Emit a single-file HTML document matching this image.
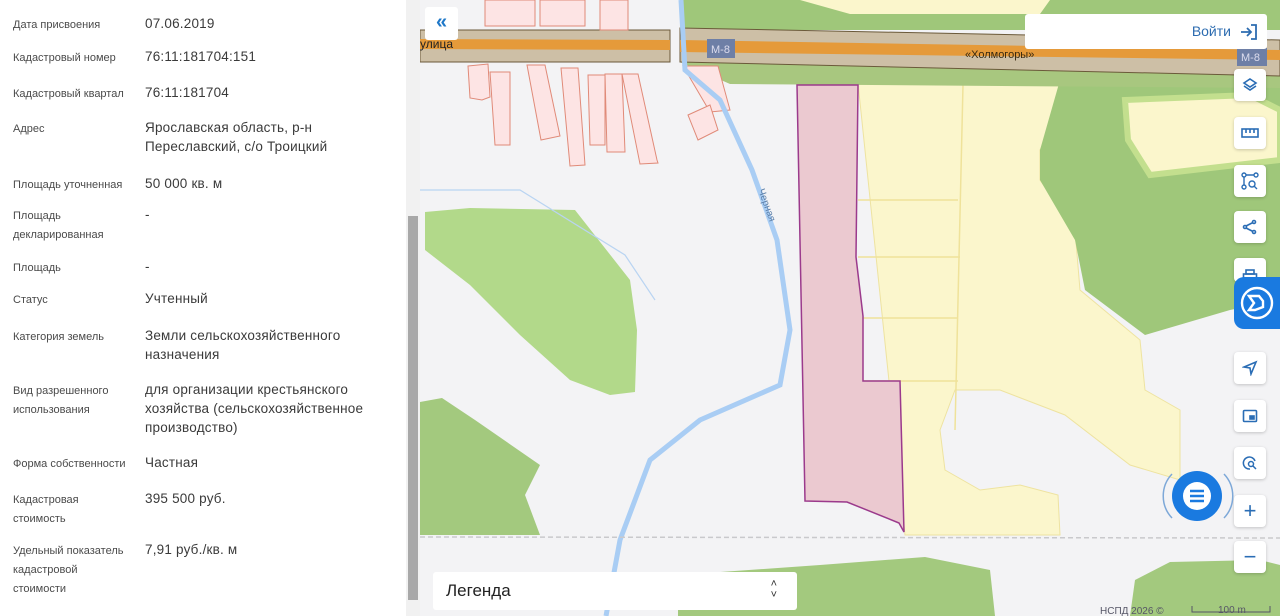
<!DOCTYPE html>
<html><head><meta charset="utf-8"><style>
*{margin:0;padding:0;box-sizing:border-box}
body{width:1280px;height:616px;overflow:hidden;position:relative;background:#f3f3f5;font-family:"Liberation Sans","DejaVu Sans",sans-serif}
#panel{position:absolute;left:0;top:0;width:406px;height:616px;background:#fff}
.l{position:absolute;left:13px;font-size:11px;color:#4a4a4a;line-height:19px}
.v{position:absolute;left:145px;font-size:13.5px;color:#3a3a3a;line-height:19px;letter-spacing:.2px}
#sb{position:absolute;left:406px;top:0;width:14px;height:616px;background:#f1f1f1}
#thumb{position:absolute;left:408px;top:216px;width:10px;height:384px;background:#a8a8a8}
.btn{position:absolute;left:1234px;width:32px;height:32px;background:#fff;border-radius:4px;box-shadow:0 1px 3px rgba(0,0,0,.2);display:flex;align-items:center;justify-content:center}
</style></head><body>
<svg style="position:absolute;left:0;top:0" width="1280" height="616" viewBox="0 0 1280 616">
<rect x="420" y="0" width="860" height="616" fill="#f3f3f5"/>
<polygon points="425,212 470,208 575,210 630,280 637,330 635,392 610,395 570,380 520,335 470,285 425,250" fill="#b2d98a"/>
<polygon points="420,402 442,398 475,420 540,465 525,495 540,535 420,535" fill="#a3c97e"/>
<polygon points="678,575 820,565 925,557 990,570 995,616 678,616" fill="#a3c97e"/>
<polygon points="1135,580 1170,562 1260,560 1280,565 1280,616 1130,616" fill="#a3c97e"/>
<polygon points="680,0 1280,0 1280,30 680,30" fill="#9fc77a"/>
<polygon points="800,0 1050,0 1040,14 850,14" fill="#fbf6cc"/>
<polygon points="858,83 1080,80 1040,150 1040,180 1075,230 1080,290 1140,340 1145,390 1180,410 1180,480 1130,465 1065,415 1000,390 955,390 940,430 945,470 980,490 1020,485 1058,495 1060,535 905,535" fill="#fbf6cc" stroke="#eee3a0" stroke-width="1"/>
<polygon points="1060,80 1280,80 1280,300 1230,310 1145,335 1085,290 1075,240 1040,180 1040,150" fill="#9fc77a"/>
<polygon points="1125,100 1250,95 1280,110 1280,160 1150,175 1128,140" fill="#fbf6cc" stroke="#c3df8e" stroke-width="6"/>
<path d="M858,200H958M858,257H960M858,318H958M863,381H958M963,85L955,430" stroke="#efe29a" stroke-width="1.5" fill="none"/>
<polygon points="680,62 1280,72 1280,88 730,84" fill="#a8c77f"/>
<polygon points="420,30 670,30 670,62 420,62" fill="#cdbfa6" stroke="#6b5a3a" stroke-width="1"/>
<polygon points="680,28 1280,40 1280,76 680,62" fill="#cdbfa6" stroke="#6b5a3a" stroke-width="1"/>
<polygon points="420,39 670,40 670,50 420,49" fill="#e59a3a"/>
<polygon points="680,40 1280,50 1280,60 680,52" fill="#e59a3a"/>
<g fill="#fde4e4" stroke="#e08a78" stroke-width="1">
<rect x="485" y="0" width="50" height="26"/><rect x="540" y="0" width="45" height="26"/><rect x="600" y="0" width="28" height="30"/>
<polygon points="468,66 488,64 490,97 482,100 470,98"/><polygon points="490,72 510,72 510,145 495,145"/>
<polygon points="527,65 545,65 560,136 541,140"/><polygon points="561,68 578,68 585,165 570,166"/>
<polygon points="588,75 605,75 605,145 590,145"/><polygon points="605,74 622,74 625,152 607,152"/>
<polygon points="622,74 638,74 657,160 658,163 640,164"/><polygon points="683,66 718,66 730,110 710,112"/>
<polygon points="688,115 710,105 718,130 698,140"/>
</g>
<path d="M681,0 L685,70 L720,100 L752,170 L777,240 L790,330 L780,385 L700,420 L650,460 L620,540 L606,616" stroke="#a9cdf4" stroke-width="5" fill="none"/>
<path d="M420,190 L520,190 L625,255 L655,300" stroke="#b9d4f2" stroke-width="1.2" fill="none"/>
<text x="758" y="190" font-size="10" fill="#5c7fa8" transform="rotate(70 758 190)">Черная</text>
<polygon points="797,85 858,85 856,257 863,316 863,381 900,381 904,532 899,523 847,502 805,501" fill="#ebc9d0" stroke="#9b3a8c" stroke-width="1.5"/>
<path d="M420,537 L1280,538" stroke="#c9c9cc" stroke-width="1.5" stroke-dasharray="5,3"/>
<rect x="707" y="39" width="28" height="19" fill="#6e7fa6"/><text x="711" y="53" font-size="11" fill="#dde">M-8</text>
<rect x="1237" y="48" width="30" height="18" fill="#6e7fa6"/><text x="1241" y="61" font-size="11" fill="#dde">M-8</text>
<text x="965" y="58" font-size="11" fill="#3a2a10">«Холмогоры»</text>
<text x="420" y="48" font-size="12" fill="#222">улица</text>
<text x="1100" y="614" font-size="10" fill="#556">НСПД 2026 ©</text>
<text x="1218" y="613" font-size="10" fill="#556">100 m</text>
<path d="M1192,606V612H1270V606" stroke="#556" fill="none"/>
</svg>
<div id="panel">
<div class="l" style="top:16px">Дата присвоения</div><div class="v" style="top:14px">07.06.2019</div>
<div class="l" style="top:49px">Кадастровый номер</div><div class="v" style="top:47px">76:11:181704:151</div>
<div class="l" style="top:85px">Кадастровый квартал</div><div class="v" style="top:83px">76:11:181704</div>
<div class="l" style="top:120px">Адрес</div><div class="v" style="top:118px">Ярославская область, р-н<br>Переславский, с/о Троицкий</div>
<div class="l" style="top:176px">Площадь уточненная</div><div class="v" style="top:174px">50 000 кв. м</div>
<div class="l" style="top:207px">Площадь<br>декларированная</div><div class="v" style="top:205px">-</div>
<div class="l" style="top:259px">Площадь</div><div class="v" style="top:257px">-</div>
<div class="l" style="top:291px">Статус</div><div class="v" style="top:289px">Учтенный</div>
<div class="l" style="top:328px">Категория земель</div><div class="v" style="top:326px">Земли сельскохозяйственного<br>назначения</div>
<div class="l" style="top:382px">Вид разрешенного<br>использования</div><div class="v" style="top:380px">для организации крестьянского<br>хозяйства (сельскохозяйственное<br>производство)</div>
<div class="l" style="top:455px">Форма собственности</div><div class="v" style="top:453px">Частная</div>
<div class="l" style="top:491px">Кадастровая<br>стоимость</div><div class="v" style="top:489px">395 500 руб.</div>
<div class="l" style="top:542px">Удельный показатель<br>кадастровой<br>стоимости</div><div class="v" style="top:540px">7,91 руб./кв. м</div>
</div>
<div id="sb"></div><div id="thumb"></div>
<div style="position:absolute;left:425px;top:7px;width:33px;height:33px;background:#fff;border-radius:3px;color:#1f78c8;font-size:20px;text-align:center;line-height:30px;font-weight:bold">«</div>
<div style="position:absolute;left:1025px;top:14px;width:242px;height:35px;background:#fff;border-radius:3px;color:#2d6cb0;font-size:14px;text-align:right;padding:9px 36px 0 0">Войти</div>
<svg style="position:absolute;left:1240px;top:23px" width="18" height="18" viewBox="0 0 18 18" fill="none" stroke="#2d6cb0" stroke-width="1.8"><path d="M1,9H11M7,5L11,9L7,13M11,2H16V16H11"/></svg>
<div class="btn" style="top:69px"><svg width="16" height="16" viewBox="0 0 16 16" fill="none" stroke="#2a6db5" stroke-width="1.6"><path d="M8,2L14,6L8,10L2,6Z M2,9L8,13L14,9"/></svg></div>
<div class="btn" style="top:117px"><svg width="18" height="12" viewBox="0 0 18 12" fill="none" stroke="#2a6db5" stroke-width="1.6"><rect x="1" y="2" width="16" height="8"/><path d="M5,2V6M9,2V6M13,2V6"/></svg></div>
<div class="btn" style="top:165px"><svg width="18" height="18" viewBox="0 0 18 18" fill="none" stroke="#2a6db5" stroke-width="1.4"><circle cx="3" cy="3" r="2"/><circle cx="15" cy="3" r="2"/><circle cx="3" cy="15" r="2"/><circle cx="11" cy="12" r="3"/><path d="M5,3H13M3,5V13M13,14L16,17"/></svg></div>
<div class="btn" style="top:211px"><svg width="16" height="16" viewBox="0 0 16 16" fill="none" stroke="#2a6db5" stroke-width="1.6"><circle cx="12" cy="3" r="1.5"/><circle cx="3" cy="8" r="1.5"/><circle cx="12" cy="13" r="1.5"/><path d="M4,7L11,3.5M4,9L11,12.5"/></svg></div>
<div class="btn" style="top:258px;height:24px;align-items:flex-end"><svg width="16" height="14" viewBox="0 0 16 14" fill="none" stroke="#2a6db5" stroke-width="1.6"><rect x="4" y="2" width="8" height="4"/><rect x="1.5" y="6" width="13" height="8"/></svg></div>
<div style="position:absolute;left:1234px;top:277px;width:46px;height:52px;background:#1a7ae0;border-radius:10px 0 0 10px"><svg width="40" height="40" viewBox="0 0 40 40" style="margin:6px 0 0 3px" fill="none" stroke="#fff" stroke-width="2.4"><circle cx="20" cy="20" r="15"/><path d="M12,13H22L26,18V24L18,27H12L17,20Z"/></svg></div>
<div class="btn" style="top:352px"><svg width="16" height="16" viewBox="0 0 16 16" fill="none" stroke="#2a6db5" stroke-width="1.6"><path d="M14,2L2,7L8,8L9,14Z"/></svg></div>
<div class="btn" style="top:400px"><svg width="16" height="16" viewBox="0 0 16 16" fill="none" stroke="#2a6db5" stroke-width="1.6"><rect x="1.5" y="2.5" width="13" height="11" rx="1"/><rect x="8" y="8" width="4" height="3" fill="#2a6db5"/></svg></div>
<div class="btn" style="top:447px"><svg width="16" height="16" viewBox="0 0 16 16" fill="none" stroke="#2a6db5" stroke-width="1.5"><path d="M8,14A6,6 0 1 1 13,6"/><circle cx="9" cy="9" r="2.5"/><path d="M11,11L14,14"/></svg></div>
<div class="btn" style="top:495px;color:#2a6db5;font-size:22px">+</div>
<div class="btn" style="top:541px;color:#2a6db5;font-size:22px">−</div>
<svg style="position:absolute;left:1158px;top:456px" width="80" height="80" viewBox="0 0 80 80" fill="none"><path d="M14,18A32,32 0 0 0 14,62M66,18A32,32 0 0 1 66,62" stroke="#7da8d8" stroke-width="1.5"/><circle cx="39" cy="40" r="25" fill="#1a7ae0"/><circle cx="39" cy="40" r="14" fill="#fff"/><path d="M32,35H46M32,40H46M32,45H46" stroke="#1a7ae0" stroke-width="2.4"/></svg>
<div style="position:absolute;left:433px;top:572px;width:364px;height:38px;background:#fff;border-radius:3px;font-size:17px;color:#222;padding:9px 0 0 13px">Легенда<span style="position:absolute;right:20px;top:7px;font-size:11px;line-height:11px;color:#333">˄<br>˅</span></div>
</body></html>
